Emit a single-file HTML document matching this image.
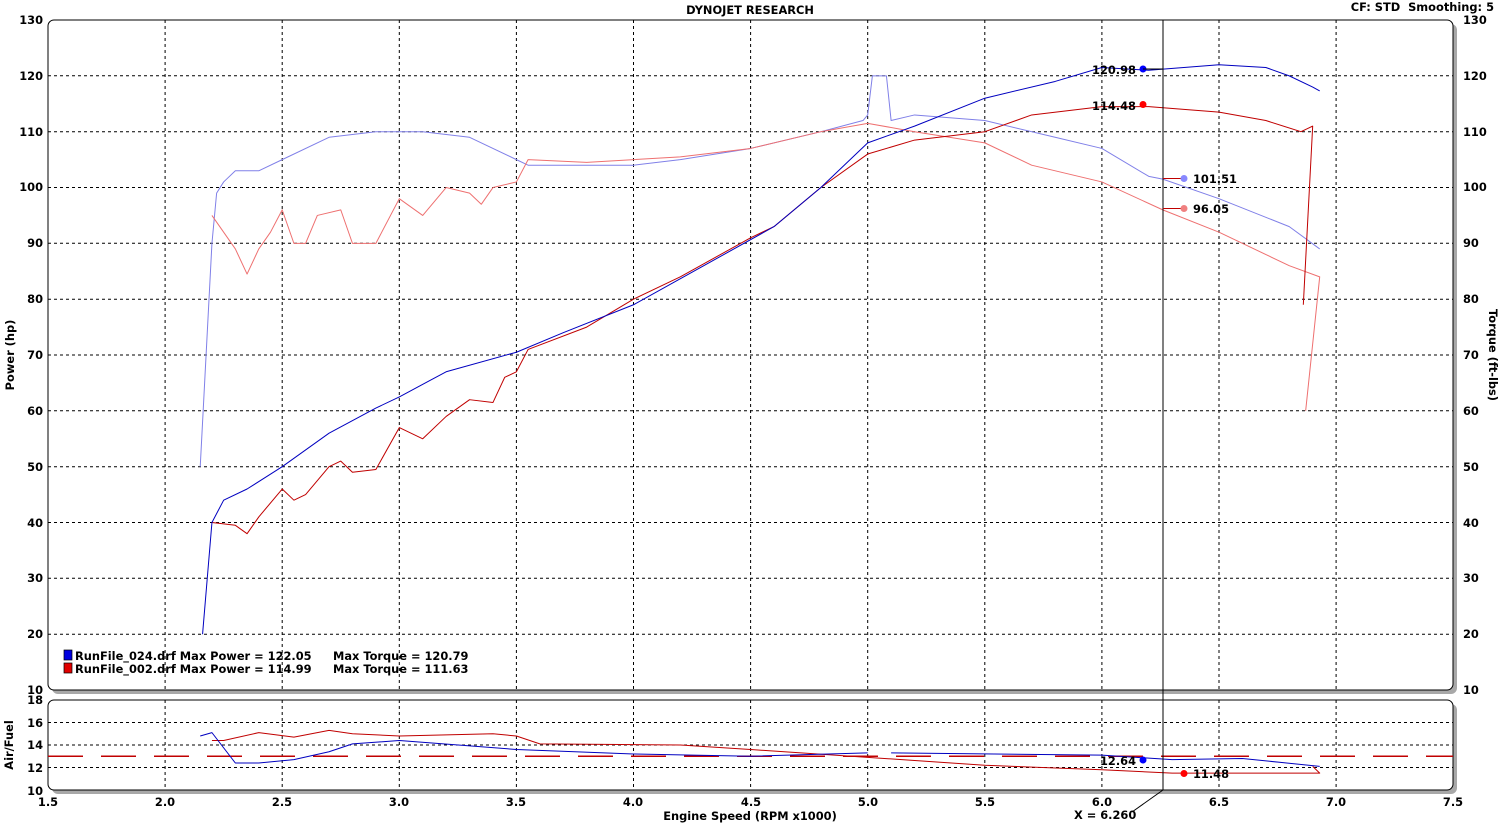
<!DOCTYPE html>
<html><head><meta charset="utf-8"><style>
html,body{margin:0;padding:0;background:#fff}
svg text{font-family:"DejaVu Sans","Liberation Sans",sans-serif;font-weight:bold;font-size:11.4px;fill:#000}
.g{stroke:#000;stroke-width:1;stroke-dasharray:3,3;fill:none}
.c{fill:none;vector-effect:non-scaling-stroke;stroke-linejoin:round}
</style></head><body>
<svg width="1503" height="823" viewBox="0 0 1503 823" xmlns="http://www.w3.org/2000/svg">
<rect x="52" y="24" width="1405" height="670" rx="6" fill="#a8a8a8"/>
<rect x="52" y="704" width="1405" height="90" rx="6" fill="#a8a8a8"/>
<rect x="48" y="20" width="1405" height="670" rx="6" fill="#fff" stroke="#000"/>
<rect x="48" y="700" width="1405" height="90" rx="6" fill="#fff" stroke="#000"/>
<g class="g">
<path d="M165.1 20V690M282.2 20V690M399.3 20V690M516.4 20V690M633.5 20V690M750.6 20V690M867.7 20V690M984.8 20V690M1101.9 20V690M1219 20V690M1336.1 20V690"/>
<path d="M165.1 700V790M282.2 700V790M399.3 700V790M516.4 700V790M633.5 700V790M750.6 700V790M867.7 700V790M984.8 700V790M1101.9 700V790M1219 700V790M1336.1 700V790"/>
<path d="M48 75.8H1453M48 131.7H1453M48 187.5H1453M48 243.3H1453M48 299.2H1453M48 355H1453M48 410.8H1453M48 466.7H1453M48 522.5H1453M48 578.3H1453M48 634.2H1453"/>
<path d="M48 722.5H1453M48 745H1453M48 767.5H1453"/>
</g>
<path d="M48 756.3H1453" stroke="#c00000" stroke-width="1.5" stroke-dasharray="35,18"/>
<g text-anchor="end">
<text x="43" y="24">130</text><text x="43" y="80">120</text><text x="43" y="136">110</text><text x="43" y="191">100</text>
<text x="43" y="247">90</text><text x="43" y="303">80</text><text x="43" y="359">70</text><text x="43" y="415">60</text>
<text x="43" y="471">50</text><text x="43" y="527">40</text><text x="43" y="582">30</text><text x="43" y="638">20</text><text x="43" y="694">10</text>
<text x="43" y="704">18</text><text x="43" y="727">16</text><text x="43" y="749">14</text><text x="43" y="772">12</text><text x="43" y="795">10</text>
</g>
<g text-anchor="start">
<text x="1463" y="24">130</text><text x="1463" y="80">120</text><text x="1463" y="136">110</text><text x="1463" y="191">100</text>
<text x="1463" y="247">90</text><text x="1463" y="303">80</text><text x="1463" y="359">70</text><text x="1463" y="415">60</text>
<text x="1463" y="471">50</text><text x="1463" y="527">40</text><text x="1463" y="582">30</text><text x="1463" y="638">20</text><text x="1463" y="694">10</text>
</g>
<g text-anchor="middle">
<text x="48" y="806">1.5</text><text x="165" y="806">2.0</text><text x="282" y="806">2.5</text><text x="399" y="806">3.0</text><text x="516" y="806">3.5</text><text x="633" y="806">4.0</text><text x="751" y="806">4.5</text><text x="868" y="806">5.0</text><text x="985" y="806">5.5</text><text x="1102" y="806">6.0</text><text x="1219" y="806">6.5</text><text x="1336" y="806">7.0</text><text x="1453" y="806">7.5</text>
<text x="750" y="820" font-size="12">Engine Speed (RPM x1000)</text>
<text x="750" y="14">DYNOJET RESEARCH</text>
</g>
<text x="1494" y="11" text-anchor="end">CF: STD&#160; Smoothing: 5</text>
<text transform="translate(14,355) rotate(-90)" text-anchor="middle">Power (hp)</text>
<text transform="translate(1489,355) rotate(90)" text-anchor="middle">Torque (ft-lbs)</text>
<text transform="translate(13,745) rotate(-90)" text-anchor="middle">Air/Fuel</text>
<g transform="matrix(234.2,0,0,-5.583,-303.3,745.83)">
<polyline class="c" stroke="#8080e8" stroke-width="1" points="2.15,50 2.2,90 2.22,99 2.25,101 2.3,103 2.4,103 2.5,105 2.7,109 2.9,110 3.1,110 3.3,109 3.5,105 3.55,104 3.8,104 4,104 4.2,105 4.5,107 4.8,110 4.98,112 5,113 5.02,120 5.08,120 5.1,112 5.2,113 5.5,112 5.8,109 6,107 6.2,102 6.26,101.5 6.5,98 6.8,93 6.93,89"/>
<polyline class="c" stroke="#ee7070" stroke-width="1" points="2.2,95 2.3,89 2.35,84.5 2.4,89 2.45,92 2.5,96 2.55,90 2.6,90 2.65,95 2.75,96 2.8,90 2.9,90 3,98 3.1,95 3.2,100 3.3,99 3.35,97 3.4,100 3.5,101 3.55,105 3.8,104.5 4.2,105.5 4.5,107 4.8,110 5,111.5 5.2,110 5.5,108 5.7,104 6,101 6.26,96 6.5,92 6.8,86 6.93,84 6.87,60"/>
<polyline class="c" stroke="#c00000" stroke-width="1" points="2.2,40 2.3,39.5 2.35,38 2.4,41 2.5,46 2.55,44 2.6,45 2.7,50 2.75,51 2.8,49 2.9,49.5 3,57 3.1,55 3.2,59 3.3,62 3.4,61.5 3.45,66 3.5,67 3.55,71 3.8,75 4,80 4.2,84 4.5,91 4.6,93 4.8,100 5,106 5.2,108.5 5.5,110 5.7,113 6,114.5 6.2,114.5 6.5,113.5 6.7,112 6.85,110 6.9,111 6.86,79"/>
<polyline class="c" stroke="#0000c0" stroke-width="1" points="2.16,20 2.2,40 2.25,44 2.35,46 2.5,50 2.7,56 2.9,60.5 3,62.5 3.2,67 3.5,70.5 3.7,74 4,79 4.3,86 4.6,93 4.8,100 5,108 5.2,111 5.5,116 5.8,119 6,121.5 6.2,121 6.5,122 6.7,121.5 6.8,120 6.9,118 6.93,117.3"/>
</g>
<g transform="matrix(234.2,0,0,-11.25,-303.3,902.5)">
<polyline class="c" stroke="#c00000" stroke-width="1" points="2.2,14.4 2.25,14.4 2.4,15.1 2.55,14.7 2.7,15.3 2.8,15 3,14.8 3.2,14.9 3.4,15 3.5,14.8 3.6,14.1 4.2,14 4.5,13.6 5,12.9 5.5,12.2 6,11.8 6.3,11.5 6.93,11.5 6.9,12.1"/>
<polyline class="c" stroke="#0000c0" stroke-width="1" points="2.15,14.8 2.2,15.1 2.3,12.4 2.4,12.4 2.55,12.7 2.7,13.4 2.8,14.1 3,14.4 3.5,13.6 4,13.2 4.5,13 5,13.3"/>
<polyline class="c" stroke="#0000c0" stroke-width="1" points="5.1,13.3 6,13.1 6.3,12.7 6.6,12.8 6.93,12.1"/>
</g>
<path d="M1163 20V790M1163 790L1132 812" stroke="#000" fill="none"/>
<text x="1074" y="819">X = 6.260</text>
<circle cx="1143" cy="69" r="3.5" fill="#0000ff"/><path d="M1143 69H1163" stroke="#000"/>
<text x="1136" y="74" text-anchor="end">120.98</text>
<circle cx="1143" cy="104.5" r="3.5" fill="#ff0000"/>
<text x="1136" y="110" text-anchor="end">114.48</text>
<path d="M1163 178.5H1183M1163 208.5H1183" stroke="#c00000"/>
<circle cx="1184" cy="178.5" r="3.5" fill="#8888ff"/><text x="1193" y="183">101.51</text>
<circle cx="1184" cy="208.5" r="3.5" fill="#f08080"/><text x="1193" y="213">96.05</text>
<circle cx="1143" cy="760" r="3.5" fill="#0000ff"/><text x="1136" y="765" text-anchor="end">12.64</text>
<circle cx="1184" cy="773.5" r="3.5" fill="#ff0000"/><text x="1193" y="778">11.48</text>
<rect x="64" y="650" width="8" height="10" fill="#0000e0" stroke="#000" stroke-width="0.7"/>
<rect x="64" y="663" width="8" height="10" fill="#e00000" stroke="#000" stroke-width="0.7"/>
<text x="75" y="660">RunFile_024.drf Max Power = 122.05</text><text x="333" y="660">Max Torque = 120.79</text>
<text x="75" y="673">RunFile_002.drf Max Power = 114.99</text><text x="333" y="673">Max Torque = 111.63</text>
</svg>
</body></html>
